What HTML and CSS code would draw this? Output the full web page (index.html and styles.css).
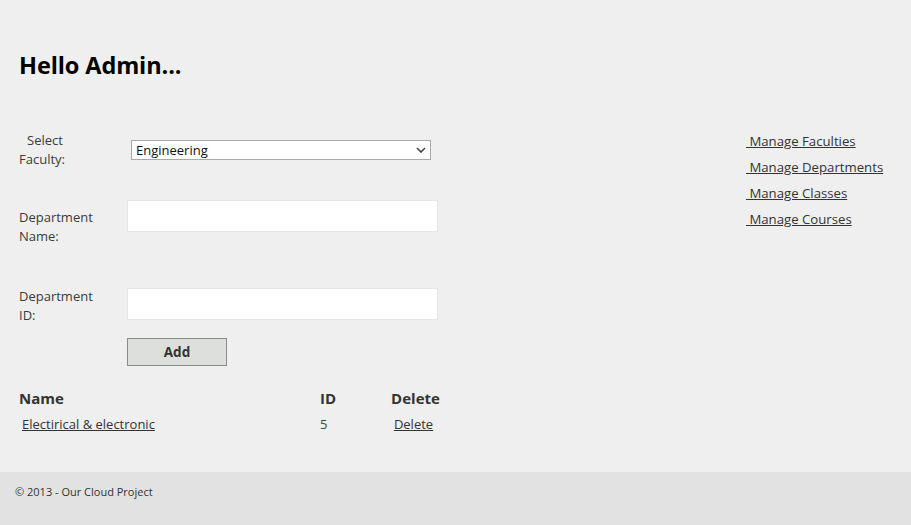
FILE: index.html
```html
<!DOCTYPE html>
<html>
<head>
<meta charset="utf-8">
<title>Departments</title>
<link rel="stylesheet" href="styles.css">
</head>
<body>
<div class="page">
  <div class="main">
    <h1 class="greeting">Hello Admin...</h1>
    <div class="form">
      <div class="row row-faculty">
        <div class="label label-indent">Select<br>Faculty:</div>
        <div class="select-wrap">
          <select class="select">
            <option>Engineering</option>
          </select>
          <svg class="chev" width="10" height="6" viewBox="0 0 10 6"><path d="M1 1 L5 5 L9 1" fill="none" stroke="#444" stroke-width="1.6"/></svg>
        </div>
      </div>
      <div class="row row-name">
        <div class="label">Department<br>Name:</div>
        <input class="text-input" type="text">
      </div>
      <div class="row row-id">
        <div class="label">Department<br>ID:</div>
        <input class="text-input" type="text">
      </div>
      <div class="row row-btn">
        <button class="add-btn">Add</button>
      </div>
    </div>
    <div class="grid">
      <div class="th">Name</div>
      <div class="th">ID</div>
      <div class="th th-center">Delete</div>
      <div class="td"><a class="link link-name" href="#">Electirical &amp; electronic</a></div>
      <div class="td">5</div>
      <div class="td td-center"><a class="link link-del" href="#">Delete</a></div>
    </div>
  </div>
  <nav class="side">
    <a class="link side-link" href="#">&nbsp;Manage Faculties</a>
    <a class="link side-link" href="#">&nbsp;Manage Departments</a>
    <a class="link side-link" href="#">&nbsp;Manage Classes</a>
    <a class="link side-link" href="#">&nbsp;Manage Courses</a>
  </nav>
</div>
<footer class="footer">© 2013 - Our Cloud Project</footer>
</body>
</html>
```
FILE: styles.css
```css
html, body {
  margin: 0;
  padding: 0;
  background: #efefef;
  font-family: "Open Sans", "Noto Sans", sans-serif;
  color: #333;
}
.page {
  display: flex;
  justify-content: space-between;
  height: 472px;
}
.main {
  padding-left: 19px;
  width: 440px;
}
.greeting {
  margin: 50px 0 0 0;
  font-size: 23.5px;
  line-height: 30px;
  font-weight: 700;
  color: #000;
  letter-spacing: -0.1px;
}
.form {
  margin-top: 51px;
}
.row {
  display: flex;
  align-items: flex-start;
}
.label {
  width: 108px;
  font-size: 13px;
  line-height: 19px;
  color: #3a3a3a;
}
.label-indent {
  text-indent: 8px;
}
.row-faculty {
  height: 38px;
}
.select-wrap {
  position: relative;
  margin-top: 9px;
  margin-left: 4px;
}
.select {
  appearance: none;
  -webkit-appearance: none;
  width: 300px;
  height: 20px;
  border: 1px solid #a9a9a9;
  background: #fff;
  font-family: "Open Sans", sans-serif;
  font-size: 13px;
  color: #111;
  padding: 0 0 0 4px;
  margin: 0;
  border-radius: 0;
  display: block;
}
.chev {
  position: absolute;
  right: 5px;
  top: 7px;
}
.row-name {
  margin-top: 31px;
}
.row-name .label {
  padding-top: 8px;
}
.row-id {
  margin-top: 41px;
}
.row-id .text-input {
  margin-top: 1px;
}
.text-input {
  width: 311px;
  height: 32px;
  box-sizing: border-box;
  border: 1px solid #e6e6e6;
  background: #fff;
  margin: 0;
  padding: 0;
}
.row-btn {
  margin-top: 13px;
  padding-left: 108px;
}
.add-btn {
  width: 100px;
  height: 28px;
  box-sizing: border-box;
  background: #dcdfdc;
  border: 1px solid #8a8a8a;
  font-family: "Open Sans", sans-serif;
  font-weight: 700;
  font-size: 13.5px;
  color: #333;
  margin: 0;
  padding: 0;
}
.grid {
  display: grid;
  grid-template-columns: 301px 68px 55px;
  row-gap: 7px;
  margin-top: 23px;
}
.th {
  font-size: 15px;
  line-height: 19px;
  font-weight: 700;
  color: #333;
}
.th-center, .td-center {
  text-align: center;
}
.td {
  font-size: 13px;
  line-height: 19px;
  color: #444;
}
.link {
  color: #333;
  text-decoration: underline;
  font-size: 13px;
}
.link-name {
  padding-left: 3px;
}
.link-del {
  margin-right: 4px;
}
.side {
  width: 165px;
  padding-top: 132px;
  display: flex;
  flex-direction: column;
}
.side-link {
  line-height: 19px;
  margin-bottom: 7px;
  align-self: flex-start;
  font-size: 13.2px;
}
.footer {
  height: 53px;
  background: #e2e2e2;
  box-sizing: border-box;
  padding: 10px 0 0 15px;
  font-size: 11px;
  line-height: 19px;
  color: #333;
}
```
